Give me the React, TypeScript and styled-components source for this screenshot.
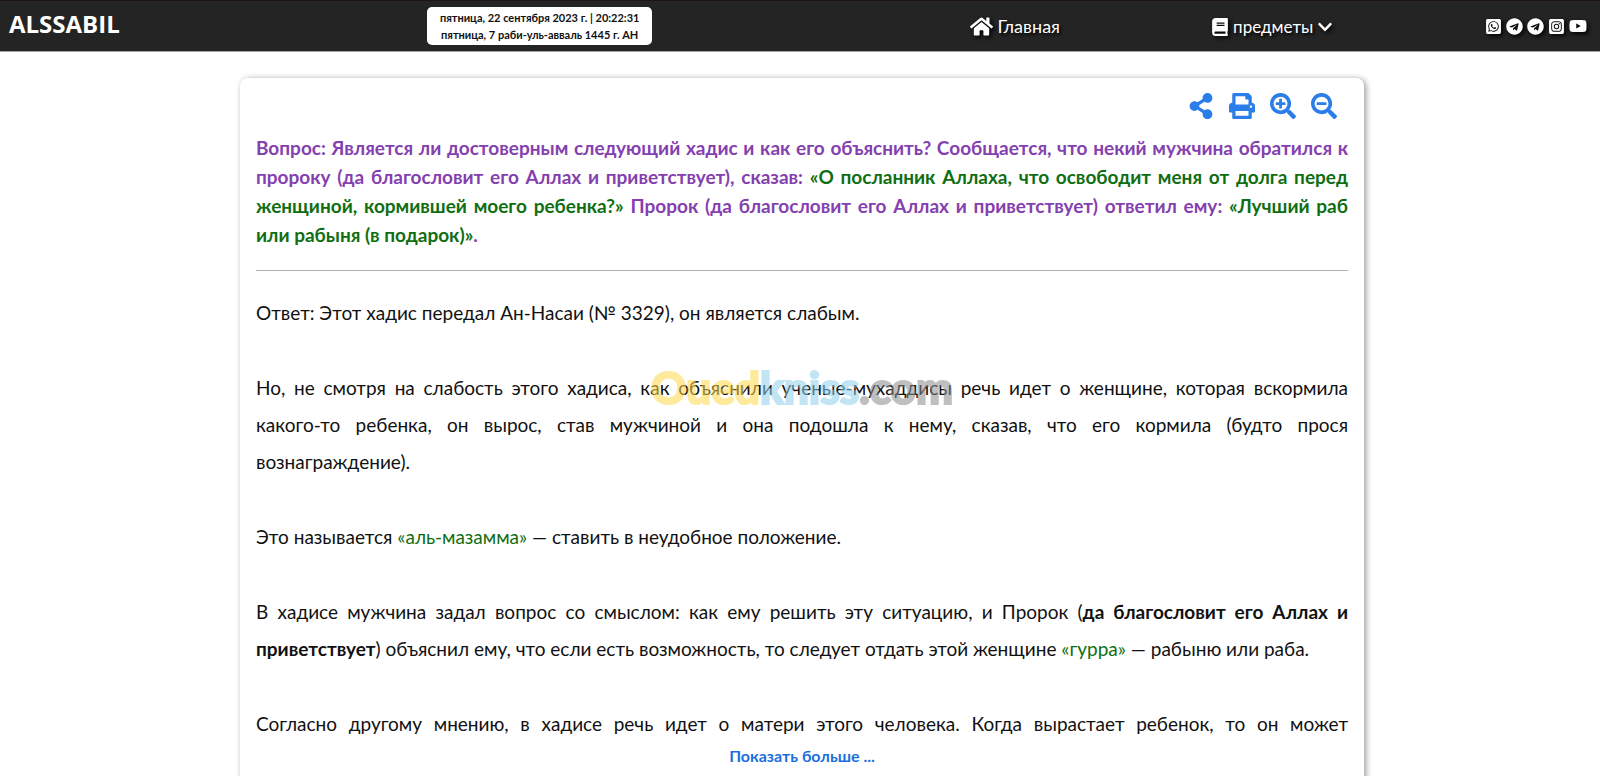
import React from "react";
import styled, { createGlobalStyle } from "styled-components";
import {
  FaHome,
  FaBook,
  FaChevronDown,
  FaWhatsappSquare,
  FaTelegram,
  FaInstagramSquare,
  FaYoutube,
  FaShareAlt,
  FaPrint,
  FaSearchPlus,
  FaSearchMinus,
} from "react-icons/fa";

const GlobalStyle = createGlobalStyle`
  *, *::before, *::after { box-sizing: border-box; }
  body {
    margin: 0;
    background: #fff;
    color: #111;
    font-family: Lato, "Liberation Sans", sans-serif;
    font-size: 19px;
  }
  p { margin: 0; }
`;

const Page = styled.div`
  height: 100vh;
  overflow: hidden;
`;

const Header = styled.header`
  display: grid;
  grid-template-columns: 26.7% 225px 15.5% 230px 284px 1fr;
  align-items: center;
  height: 52px;
  background: #242424;
  border-top: 1px solid #1c1218;
  border-bottom: 1px solid #a6a6a6;
  color: #fff;
`;

const Brand = styled.a`
  padding-left: 9px;
  padding-bottom: 4px;
  color: #fff;
  font-family: "Open Sans", sans-serif;
  font-size: 24px;
  font-weight: 700;
  line-height: 30px;
  text-decoration: none;
`;

const DateBox = styled.time`
  display: block;
  height: 38px;
  padding-top: 2px;
  border-radius: 5px;
  background: #fff;
  color: #111;
  font-size: 11px;
  font-weight: 700;
  line-height: 17px;
  text-align: center;
  white-space: nowrap;
`;

const NavItem = styled.a`
  grid-column: 4;
  display: flex;
  align-items: center;
  justify-content: center;
  gap: 4px;
  color: #fff;
  font-size: 18px;
  line-height: 24px;
  text-decoration: none;
  text-shadow: 2px 2px 3px #000;

  svg { filter: drop-shadow(2px 2px 2px #000); }
`;

const NavButton = styled.button`
  display: flex;
  align-items: center;
  justify-content: center;
  gap: 4px;
  border: 0;
  padding: 2px 0 0;
  background: none;
  color: #fff;
  font: inherit;
  font-size: 17px;
  line-height: 24px;
  text-shadow: 2px 2px 3px #000;

  svg { filter: drop-shadow(2px 2px 2px #000); }
`;

const Socials = styled.nav`
  display: flex;
  align-items: center;
  justify-content: flex-end;
  gap: 4px;
  padding-right: 13px;

  a { display: flex; color: #fff; }
  svg { filter: drop-shadow(2px 2px 2px #000); }
`;

const Card = styled.main`
  position: relative;
  margin: 26px 236px 0 240px;
  padding: 15px 16px 40px;
  border-radius: 8px;
  background: #fff;
  box-shadow: 2px 1px 6px rgba(0, 0, 0, 0.4);
`;

const Tools = styled.div`
  display: flex;
  justify-content: flex-end;
  gap: 15px;
  padding: 0 11px;

  button {
    display: flex;
    border: 0;
    padding: 0;
    background: none;
    color: #2b7de9;
  }
`;

const Question = styled.h1`
  margin: 14px 0 0;
  color: #8540b0;
  font-size: 19px;
  font-weight: 700;
  line-height: 29px;
  text-align: justify;
`;

const Quote = styled.span`
  color: #0f6e12;
`;

const Rule = styled.hr`
  margin: 21px 0 23px;
  border: 0;
  border-top: 1px solid #b0b0b0;
`;

const Answer = styled.div`
  display: flex;
  flex-direction: column;
  gap: 38px;
  line-height: 37px;
  text-align: justify;
`;

const Filled = styled.span`
  display: block;
  text-align-last: justify;
`;

const More = styled.button`
  display: block;
  margin: 2px auto 0;
  border: 0;
  padding: 0;
  background: none;
  color: #1a6fe0;
  font: inherit;
  font-size: 16px;
  font-weight: 700;
  line-height: 24px;
`;

const Watermark = styled.div`
  position: absolute;
  top: 284px;
  left: 0;
  right: 0;
  font-size: 44px;
  font-weight: 900;
  line-height: 50px;
  text-align: center;
  opacity: 0.55;
  pointer-events: none;
`;

const Tint = styled.span<{ $color: string }>`
  color: ${(p) => p.$color};
  -webkit-text-stroke: 2px ${(p) => p.$color};
`;

export default function App() {
  return (
    <Page>
      <GlobalStyle />
      <Header>
        <Brand href="#">ALSSABIL</Brand>
        <DateBox>
          пятница, 22 сентября 2023 г. | 20:22:31
          <br />
          пятница, 7 раби-уль-авваль 1445 г. AH
        </DateBox>
        <NavItem href="#">
          <FaHome size={23} />
          Главная
        </NavItem>
        <NavButton type="button">
          <FaBook size={18} />
          предметы
          <FaChevronDown size={16} />
        </NavButton>
        <Socials>
          <a href="#" aria-label="WhatsApp"><FaWhatsappSquare size={17} /></a>
          <a href="#" aria-label="Telegram"><FaTelegram size={17} /></a>
          <a href="#" aria-label="Telegram"><FaTelegram size={17} /></a>
          <a href="#" aria-label="Instagram"><FaInstagramSquare size={17} /></a>
          <a href="#" aria-label="YouTube"><FaYoutube size={18} /></a>
        </Socials>
      </Header>
      <Card>
        <Tools>
          <button type="button" aria-label="Поделиться"><FaShareAlt size={26} /></button>
          <button type="button" aria-label="Печать"><FaPrint size={26} /></button>
          <button type="button" aria-label="Увеличить"><FaSearchPlus size={26} /></button>
          <button type="button" aria-label="Уменьшить"><FaSearchMinus size={26} /></button>
        </Tools>
        <Question>
          Вопрос: Является ли достоверным следующий хадис и как его объяснить? Сообщается, что некий
          мужчина обратился к пророку (да благословит его Аллах и приветствует), сказав:{" "}
          <Quote>
            «О посланник Аллаха, что освободит меня от долга перед женщиной, кормившей моего ребенка?»
          </Quote>{" "}
          Пророк (да благословит его Аллах и приветствует) ответил ему:{" "}
          <Quote>«Лучший раб или рабыня (в подарок)»</Quote>.
        </Question>
        <Rule />
        <Answer>
          <p>Ответ: Этот хадис передал Ан-Насаи (№ 3329), он является слабым.</p>
          <p>
            <Filled>
              Но, не смотря на слабость этого хадиса, как объяснили ученые-мухаддисы речь идет о
              женщине, которая вскормила какого-то ребенка, он вырос, став мужчиной и она подошла к
              нему, сказав, что его кормила (будто прося
            </Filled>
            вознаграждение).
          </p>
          <p>
            Это называется <Quote>«аль-мазамма»</Quote> — ставить в неудобное положение.
          </p>
          <p>
            В хадисе мужчина задал вопрос со смыслом: как ему решить эту ситуацию, и Пророк (
            <b>да благословит его Аллах и приветствует</b>) объяснил ему, что если есть возможность, то
            следует отдать этой женщине <Quote>«гурра»</Quote> — рабыню или раба.
          </p>
          <p>
            <Filled>
              Согласно другому мнению, в хадисе речь идет о матери этого человека. Когда вырастает
              ребенок, то он может
            </Filled>
          </p>
        </Answer>
        <More type="button">Показать больше ...</More>
        <Watermark aria-hidden="true">
          <Tint $color="#ffd84a">Oued</Tint>
          <Tint $color="#8fd0ee">kniss</Tint>
          <Tint $color="#8c8c8c">.com</Tint>
        </Watermark>
      </Card>
    </Page>
  );
}
